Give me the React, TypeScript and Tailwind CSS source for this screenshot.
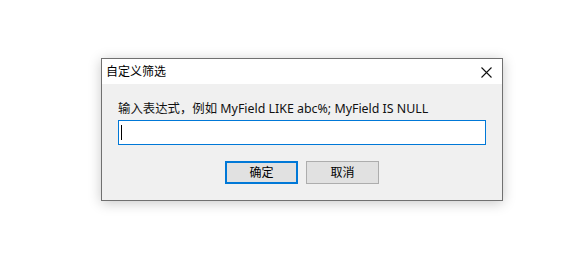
import React from 'react';

const font = { fontFamily: '"Noto Sans", "Noto Sans CJK SC", sans-serif' };

export default function App() {
    return (
        <div className="w-[563px] h-[278px] bg-white pt-[58px] pl-[101px]" style={font}>
            {/* Dialog window */}
            <div className="w-[402px] h-[143px] border border-[#707070] bg-[#f0f0f0] flex flex-col shadow-[0_2px_12px_rgba(0,0,0,0.22)]">
                {/* Title bar */}
                <div className="h-[25px] bg-white flex items-center justify-between pl-[4px] pr-[10px]">
                    <span className="text-[12px] text-black leading-none">自定义筛选</span>
                    <svg width="11" height="11" viewBox="0 0 11 11" className="mt-[1px]">
                        <path d="M0.5 0.5 L10.5 10.5 M10.5 0.5 L0.5 10.5" stroke="#111" strokeWidth="1.1" fill="none" />
                    </svg>
                </div>

                {/* Body */}
                <div className="flex-1 flex flex-col px-[16px] pt-[16px]">
                    <div className="text-[12.4px] text-[#111] leading-[18px] h-[18px]">
                        输入表达式，例如 MyField LIKE abc%; MyField IS NULL
                    </div>
                    <div className="mt-[2px] h-[25px] w-[368px] border border-[#0078d7] bg-white flex items-center pl-[2px]">
                        <div className="w-[1px] h-[15px] bg-black" />
                    </div>

                    {/* Buttons */}
                    <div className="flex justify-center gap-[8px] mt-[16px]">
                        <button className="w-[73px] h-[23px] border-2 border-[#0078d7] bg-[#e1e1e1] text-[12px] text-black leading-none">
                            确定
                        </button>
                        <button className="w-[73px] h-[23px] border border-[#adadad] bg-[#e1e1e1] text-[12px] text-black leading-none">
                            取消
                        </button>
                    </div>
                </div>
            </div>
        </div>
    );
}
